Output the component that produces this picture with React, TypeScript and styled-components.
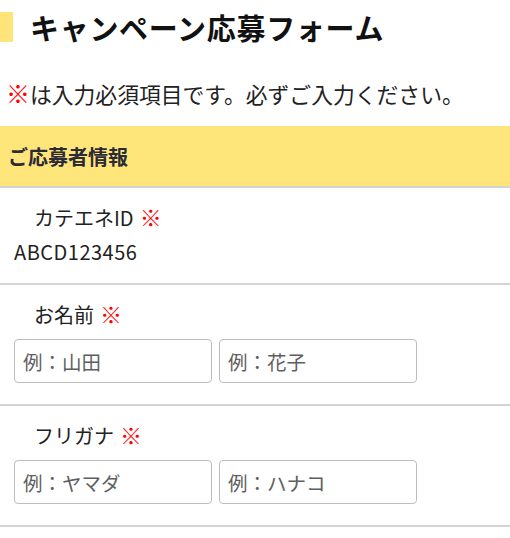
import React from 'react'
import styled, { createGlobalStyle } from 'styled-components';


const GlobalStyle = createGlobalStyle`
    body {
        margin: 0;
        background: #fff;
        font-family: "Noto Sans CJK JP", "Noto Sans", sans-serif;
        color: #222;
    }
`;

const Page = styled.div`
    width: 510px;
`;

const TitleRow = styled.div`
    display: flex;
    align-items: center;
    gap: 17px;
    margin-top: 12px;
    height: 30px;
`;

const TitleBar = styled.div`
    width: 13px;
    height: 30px;
    background: #ffe47a;
`;

const Title = styled.h1`
    margin: 0;
    font-size: 29px;
    font-weight: 700;
    letter-spacing: 0.7px;
    line-height: 30px;
    color: #111;
`;

const Note = styled.p`
    margin: 37px 0 0;
    padding-left: 6px;
    font-size: 21.8px;
    line-height: 30px;
    color: #222;
`;

const Mark = styled.span<{ $spaced?: boolean }>`
    color: #ff0000;
    font-size: 1.1em;
    line-height: 0;
    margin-left: ${p => (p.$spaced ? '6px' : '0')};
`;

const SectionHead = styled.h2`
    margin: 17px 0 0;
    height: 60px;
    display: flex;
    align-items: center;
    padding-left: 8px;
    background: #ffe67a;
    border-bottom: 2px solid #d4d4d4;
    font-size: 20px;
    font-weight: 700;
    color: #2b2b38;
`;

const Field = styled.div`
    padding: 16px 0 17px 14px;
    border-bottom: 2px solid #d4d4d4;
`;

const Label = styled.div`
    padding-left: 20px;
    font-size: 20px;
    line-height: 28px;
    color: #222;
`;

const Value = styled.div`
    margin-top: 6px;
    font-size: 20px;
    letter-spacing: 0.5px;
    line-height: 28px;
    color: #222;
`;

const InputRow = styled.div`
    display: flex;
    gap: 7px;
    margin-top: 10px;
    margin-bottom: 4px;
`;

const TextInput = styled.input`
    box-sizing: border-box;
    width: 198px;
    height: 44px;
    padding: 0 8px;
    border: 1px solid #bdbdbd;
    border-radius: 4px;
    font-family: inherit;
    font-size: 19.5px;
    color: #222;
    &::placeholder {
        color: #5e5e5e;
    }
`;


export default function App() {
    return (
        <Page>
            <GlobalStyle />
            <TitleRow>
                <TitleBar />
                <Title>キャンペーン応募フォーム</Title>
            </TitleRow>
            <Note><Mark>※</Mark>は入力必須項目です。必ずご入力ください。</Note>
            <SectionHead>ご応募者情報</SectionHead>
            <Field>
                <Label>カテエネID<Mark $spaced>※</Mark></Label>
                <Value>ABCD123456</Value>
            </Field>
            <Field>
                <Label>お名前<Mark $spaced>※</Mark></Label>
                <InputRow>
                    <TextInput placeholder="例：山田" />
                    <TextInput placeholder="例：花子" />
                </InputRow>
            </Field>
            <Field>
                <Label>フリガナ<Mark $spaced>※</Mark></Label>
                <InputRow>
                    <TextInput placeholder="例：ヤマダ" />
                    <TextInput placeholder="例：ハナコ" />
                </InputRow>
            </Field>
        </Page>
    )
}
